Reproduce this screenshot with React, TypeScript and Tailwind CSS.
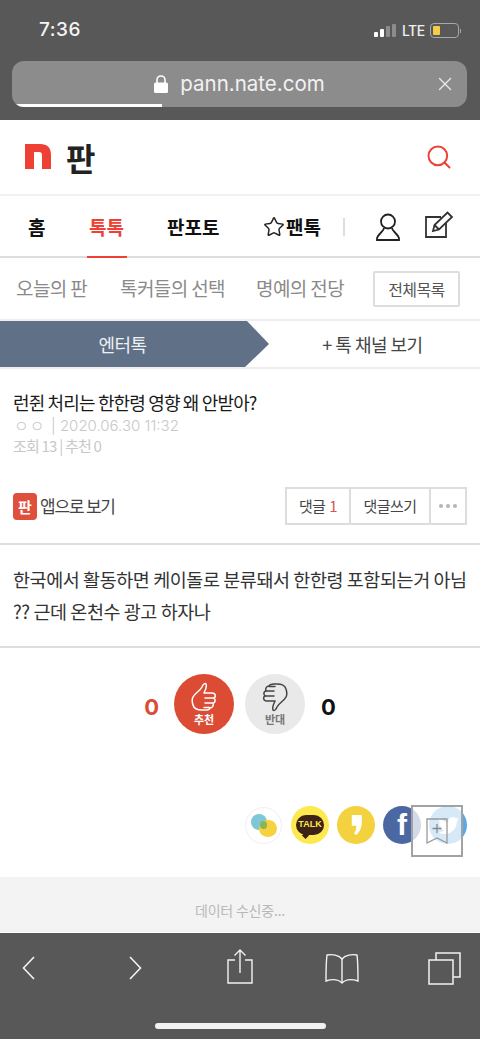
import { useState } from 'react';
import { Search, X, Star } from 'lucide-react';
import { FaTwitter } from 'react-icons/fa';

const font = "font-['Noto_Sans_CJK_KR','Noto_Sans',sans-serif]";

function TopBar() {
    return (
        <div className="h-[120px] bg-[#585858] flex flex-col">
            <div className="h-[61px] flex items-center justify-between pl-[39px] pr-[19px]">
                <span className="text-[19px] font-['Inter',sans-serif] font-medium tracking-[0.5px] text-[#f4f4f4]">7:36</span>
                <div className="flex items-center gap-[6px]">
                    <div className="flex items-end gap-[2px] h-[13px]">
                        <div className="w-[4px] h-[5px] bg-white rounded-[1px]" />
                        <div className="w-[4px] h-[8px] bg-white rounded-[1px]" />
                        <div className="w-[4px] h-[11px] bg-[#8c8c8c] rounded-[1px]" />
                        <div className="w-[4px] h-[13px] bg-[#8c8c8c] rounded-[1px]" />
                    </div>
                    <span className="w-[22px] text-[14px] tracking-[-0.5px] font-['Inter',sans-serif] font-medium text-[#efefef]">LTE</span>
                    <div className="flex items-center gap-[1px]">
                        <div className="w-[29px] h-[15px] rounded-[4px] border border-[#a8a8a8] p-[2px] flex">
                            <div className="w-[7px] bg-[#f5cc45] rounded-[1px]" />
                        </div>
                        <div className="w-[1px] h-[4px] bg-[#a8a8a8]" />
                    </div>
                </div>
            </div>
            <div className="relative ml-[12px] mr-[13px] h-[46px] rounded-[12px] bg-[#8c8c8c] flex items-center justify-center overflow-hidden">
                <svg viewBox="0 0 14 18" className="w-[14px] h-[18px] mr-[12px]">
                    <path d="M3 8 V5 A4 4 0 0 1 11 5 V8" fill="none" stroke="white" strokeWidth="1.6" />
                    <rect x="0" y="7.5" width="14" height="10.5" rx="1.5" fill="white" />
                </svg>
                <span className="text-[20.5px] leading-none font-['Inter',sans-serif] text-[#f2f2f2]">pann.nate.com</span>
                <X className="absolute right-[11px] top-[12px] w-[22px] h-[22px] text-[#e8e8e8]" strokeWidth={1.5} />
                <div className="absolute left-0 bottom-0 h-[3px] w-[150px] bg-white" />
            </div>
        </div>
    );
}

function EditIcon() {
    return (
        <svg viewBox="0 0 30 30" className="w-[30px] h-[30px]" fill="none" stroke="#333" strokeWidth="1.8">
            <path d="M22 12.5 V27 H2 V7 H17" />
            <path d="M9 21 L10.5 15 L23.5 2.5 L28 7 L15 19.5 Z" />
            <path d="M10.5 15 L15 19.5" />
        </svg>
    );
}

function Header() {
    return (
        <div className="h-[76px] flex items-center justify-between pl-[25px] pr-[27px] pb-[1px] border-b-2 border-[#f1f1f1]">
            <div className="flex items-center gap-[15px]">
                <svg viewBox="0 0 26 25" className="w-[26px] h-[25px]">
                    <path d="M0 0 H15 Q26 0 26 11 V25 H17 V11 Q17 8 14 8 H9 V25 H0 Z" fill="#ee4035" />
                </svg>
                <span className="text-[32px] leading-none font-bold text-[#222]">판</span>
            </div>
            <Search className="w-[28px] h-[28px] text-[#ee4035]" strokeWidth={1.7} />
        </div>
    );
}

function Nav() {
    return (
        <div className="h-[62px] flex items-center border-b-2 border-[#dddddd] relative">
            <span className="absolute left-[28px] top-[18px] text-[19px] leading-[26px] font-bold text-[#111]">홈</span>
            <span className="absolute left-[89px] top-[18px] text-[19px] leading-[26px] font-bold text-[#ee4035]">톡톡</span>
            <div className="absolute left-[87px] bottom-[-2px] w-[40px] h-[2px] bg-[#ee4035]" />
            <span className="absolute left-[167px] top-[18px] text-[19px] leading-[26px] font-bold text-[#111]">판포토</span>
            <div className="absolute left-[263px] top-[18px] flex items-center">
                <Star className="w-[22px] h-[22px] text-[#222]" strokeWidth={1.6} />
                <span className="text-[19px] leading-[26px] font-bold text-[#111] ml-[1px]">팬톡</span>
            </div>
            <div className="absolute left-[343px] top-[22px] w-[2px] h-[18px] bg-[#dddddd]" />
            <svg viewBox="0 0 24 28" className="absolute left-[376px] top-[17px] w-[24px] h-[28px]" fill="none" stroke="#222" strokeWidth="1.8">
                <circle cx="12" cy="8.5" r="7" />
                <path d="M8 15 C8 18 3 20 1 25 V27 H23 V25 C21 20 16 18 16 15" />
            </svg>
            <div className="absolute left-[424px] top-[14px]">
                <EditIcon />
            </div>
        </div>
    );
}

function SubNav() {
    return (
        <div className="h-[63px] flex items-center border-b-2 border-[#eeeeee] pl-[16px] text-[#8a8a8a] text-[19px] tracking-[-0.6px]">
            <span className="w-[104px]">오늘의 판</span>
            <span className="w-[136px]">톡커들의 선택</span>
            <span className="w-[117px]">명예의 전당</span>
            <div className="w-[87px] h-[36px] flex items-center justify-center rounded-[2px] border-2 border-[#dddddd] text-[#555] text-[16px]">
                전체목록
            </div>
        </div>
    );
}

function Channel() {
    return (
        <div className="h-[48px] flex border-b-2 border-[#eeeeee]">
            <div className="w-[269px] h-full bg-[#5f7087] flex items-center justify-center pr-[24px] text-[18px] tracking-[-0.5px] text-[#eef1f4] [clip-path:polygon(0_0,247px_0,269px_50%,245px_100%,0_100%)]">
                엔터톡
            </div>
            <div className="flex-1 flex items-center justify-center pr-[4px] text-[18px] tracking-[-0.5px] text-[#444]">
                + 톡 채널 보기
            </div>
        </div>
    );
}

function PostHead() {
    return (
        <div className="pl-[13px] pr-[13px] h-[176px] border-b-2 border-[#dddddd] flex flex-col">
            <h1 className="mt-[20px] text-[18px] leading-[26px] tracking-[-0.85px] text-[#1a1a1a]">런쥔 처리는 한한령 영향 왜 안받아?</h1>
            <div className="mt-[1px] flex items-center text-[15px] leading-[20px] text-[#c8c8c8] font-['Inter','Noto_Sans_CJK_KR',sans-serif] font-light">
                <span className="w-[38px] text-[16px] pl-[1px] tracking-[1px]">ㅇㅇ</span>
                <span>| 2020.06.30 11:32</span>
            </div>
            <div className="text-[15px] leading-[20px] tracking-[-0.8px] text-[#c8c8c8]">조회 13 | 추천 0</div>
            <div className="mt-[31px] flex items-center justify-between">
                <div className="flex items-center gap-[3px]">
                    <div className="w-[24px] h-[27px] rounded-[4px] bg-[#de4f3c] flex items-center justify-center text-[15px] font-bold leading-none text-white">판</div>
                    <span className="text-[17px] tracking-[-1.2px] text-[#444]">앱으로 보기</span>
                </div>
                <div className="w-[182px] h-[38px] flex border-2 border-[#dddddd] text-[15px] tracking-[-0.6px] text-[#444]">
                    <div className="w-[64px] flex items-center justify-center border-r-2 border-[#dddddd]">
                        댓글<span className="ml-[4px] text-[#d9534f]">1</span>
                    </div>
                    <div className="w-[80px] flex items-center justify-center border-r-2 border-[#dddddd]">댓글쓰기</div>
                    <div className="flex-1 flex items-center justify-center gap-[3px]">
                        <i className="w-[4px] h-[4px] rounded-full bg-[#b5b5b5]" />
                        <i className="w-[4px] h-[4px] rounded-full bg-[#b5b5b5]" />
                        <i className="w-[4px] h-[4px] rounded-full bg-[#b5b5b5]" />
                    </div>
                </div>
            </div>
        </div>
    );
}

function Thumb({ color }: { color: string }) {
    return (
        <svg viewBox="0 0 26 30" className="w-[26px] h-[30px]" fill="none" stroke={color} strokeWidth="1.5" strokeLinejoin="round" strokeLinecap="round">
            <path d="M2 15 C4 11 9 9 11 5 C12 2 14 1 15 2 C16 4 14 9 13 11 L21 11 C25 11 25 15 23 16 C25 18 24 21 22 21 C23 24 21 26 19 26 C18 29 14 28 11 28 C7 28 3 27 2 23 C1 20 1 17 2 15 Z" />
            <path d="M14 16 H23 M14 21 H22 M13 25.5 H19" />
        </svg>
    );
}

function Votes() {
    return (
        <div className="h-[229px] flex flex-col relative">
            <div className="mt-[26px] flex items-center justify-center">
                <span className="mt-[6px] text-[22px] leading-none font-bold font-['Inter',sans-serif] text-[#dc4c35] mr-[15px]">0</span>
                <div className="w-[60px] h-[60px] rounded-full bg-[#dc4c35] flex flex-col items-center justify-center">
                    <Thumb color="#ffffff" />
                    <span className="text-[11px] leading-[14px] font-bold text-white">추천</span>
                </div>
                <div className="ml-[11px] w-[60px] h-[60px] rounded-full bg-[#e9e9e9] flex flex-col items-center justify-center">
                    <div className="rotate-180">
                        <Thumb color="#444444" />
                    </div>
                    <span className="text-[11px] leading-[14px] font-bold text-[#777]">반대</span>
                </div>
                <span className="mt-[6px] text-[22px] leading-none font-bold font-['Inter',sans-serif] text-[#111] ml-[16px]">0</span>
            </div>
            <div className="mt-[72px] flex items-center gap-[8px] pl-[245px]">
                <div className="mr-[1px] w-[37px] h-[37px] rounded-full border border-[#efefef] relative bg-white">
                    <div className="absolute left-[5px] top-[6px] w-[16px] h-[16px] rounded-full bg-[#7ec7d6]" />
                    <div className="absolute left-[13px] top-[12px] w-[18px] h-[17px] rounded-full bg-[#f8d23e]" />
                    <div className="absolute left-[14px] top-[13px] w-[7px] h-[8px] rounded-full bg-[#8bb35a]" />
                </div>
                <div className="w-[38px] h-[38px] rounded-full bg-[#fde84e] flex items-center justify-center">
                    <div className="relative w-[28px] h-[20px] rounded-full bg-[#3c2217] flex items-center justify-center text-[9px] font-bold font-['Liberation_Sans',sans-serif] text-[#fde84e]">
                        TALK
                        <div className="absolute left-[7px] bottom-[-3px] w-[5px] h-[5px] rotate-45 bg-[#3c2217]" />
                    </div>
                </div>
                <div className="w-[38px] h-[38px] rounded-full bg-[#f3d13f] flex items-center justify-center">
                    <svg viewBox="0 0 15 26" className="w-[12px] h-[20px]">
                        <path d="M2 0 H15 V10 C15 17 12 22 8 26 L5 24 C7 21 8 18 8 14 H2 Z" fill="white" />
                    </svg>
                </div>
                <div className="w-[38px] h-[38px] rounded-full bg-[#4b68a3] flex items-center justify-center text-[30px] leading-none font-bold font-['Liberation_Sans',sans-serif] text-white">f</div>
                <div className="w-[38px] h-[38px] rounded-full bg-[#5aa9e6] flex items-center justify-center">
                    <FaTwitter className="w-[21px] h-[21px] text-white" />
                </div>
            </div>
            <div className="absolute left-[411px] top-[157px] w-[52px] h-[52px] border-2 border-[#a2a2a2] bg-white/75 flex items-center justify-center">
                <svg viewBox="0 0 22 26" className="w-[22px] h-[26px]" fill="none" stroke="#999" strokeWidth="1.3">
                    <path d="M1 1 H21 V25 L11 20 L1 25 Z" />
                    <path d="M11 6 V15 M6.5 10.5 H15.5" stroke="#888" />
                </svg>
            </div>
        </div>
    );
}

function BottomBar() {
    return (
        <div className="h-[107px] bg-[#585858] border-t border-[#fcfcfc] relative flex flex-col">
            <div className="h-[70px] flex items-center pl-[22px]">
                <svg viewBox="0 0 13 24" className="w-[13px] h-[24px]" fill="none" stroke="#f2f2f2" strokeWidth="1.6">
                    <path d="M12 1 L1.5 12 L12 23" />
                </svg>
                <svg viewBox="0 0 13 24" className="w-[13px] h-[24px] ml-[94px]" fill="none" stroke="#f2f2f2" strokeWidth="1.6">
                    <path d="M1 1 L11.5 12 L1 23" />
                </svg>
                <svg viewBox="0 0 26 35" className="w-[26px] h-[35px] ml-[85px] mt-[-3px]" fill="none" stroke="#f2f2f2" strokeWidth="1.4">
                    <path d="M8 11 H1 V34 H25 V11 H18" />
                    <path d="M13 24 V1 M7.5 6.5 L13 1 L18.5 6.5" />
                </svg>
                <svg viewBox="0 0 34 31" className="w-[34px] h-[31px] ml-[72px]" fill="none" stroke="#f2f2f2" strokeWidth="1.4">
                    <path d="M17 6 C14 2 7 1 2 2 C1 10 1 20 1 28 C7 26 13 26 17 30 C21 26 27 26 33 28 C33 20 33 10 32 2 C27 1 20 2 17 6 Z" />
                    <path d="M17 6 V30" />
                </svg>
                <svg viewBox="0 0 33 33" className="w-[33px] h-[33px] ml-[69px]" fill="none" stroke="#f2f2f2" strokeWidth="1.5">
                    <path d="M8 8 V1 H32 V25 H25" />
                    <rect x="1" y="8" width="24" height="24" />
                </svg>
            </div>
            <div className="absolute left-[155px] top-[90px] w-[171px] h-[6px] rounded-full bg-[#f2f2f2]" />
        </div>
    );
}

export default function App() {
    const [liked] = useState(false);

    return (
        <div className={`w-[480px] h-[1039px] overflow-hidden bg-white flex flex-col ${font}`} data-liked={liked}>
            <TopBar />
            <Header />
            <Nav />
            <SubNav />
            <Channel />
            <PostHead />
            <div className="h-[103px] pl-[13px] pr-[10px] pt-[18px] border-b-2 border-[#dddddd] text-[18.5px] leading-[32px] tracking-[-0.43px] text-[#333]">
                한국에서 활동하면 케이돌로 분류돼서 한한령 포함되는거 아님 ?? 근데 온천수 광고 하자나
            </div>
            <Votes />
            <div className="h-[55px] bg-[#f3f3f3] flex items-center justify-center pt-[12px] text-[14px] tracking-[-0.2px] text-[#b8b8b8]">
                데이터 수신중...
            </div>
            <BottomBar />
        </div>
    );
}
